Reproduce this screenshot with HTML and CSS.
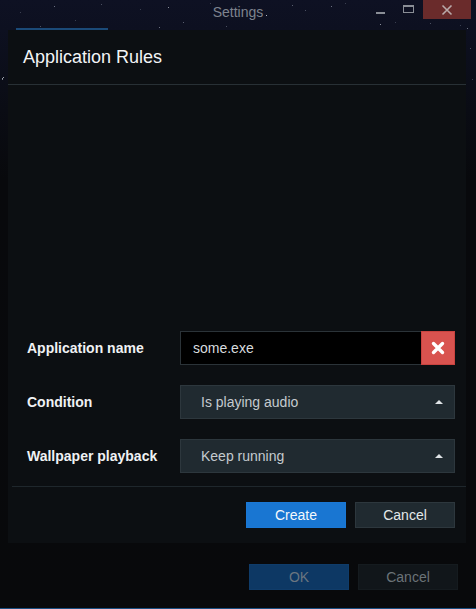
FILE: index.html
```html
<!DOCTYPE html>
<html>
<head>
<meta charset="utf-8">
<link rel="stylesheet" href="styles.css">
</head>
<body>
<div class="window">
  <div class="stars"></div>
  <div class="titlebar">
    <div class="title">Settings</div>
    <div class="controls">
      <span class="ctl min"><span class="min-bar"></span></span>
      <span class="ctl max"><span class="max-box"></span></span>
      <span class="ctl close">
        <svg width="12" height="12" viewBox="0 0 12 12"><path d="M1.5 1.5L10.5 10.5M10.5 1.5L1.5 10.5" stroke="#b9a9a9" stroke-width="1.6"/></svg>
      </span>
    </div>
  </div>
  <div class="tabline"></div>
  <div class="dialog">
    <div class="dlg-header">Application Rules</div>
    <div class="dlg-body">
      <div class="row">
        <div class="label">Application name</div>
        <div class="field">
          <div class="input">some.exe</div>
          <div class="clear">
            <svg width="14" height="14" viewBox="0 0 14 14"><path d="M2.5 2.5L11.5 11.5M11.5 2.5L2.5 11.5" stroke="#fff" stroke-width="3.4" stroke-linecap="round"/></svg>
          </div>
        </div>
      </div>
      <div class="row">
        <div class="label">Condition</div>
        <div class="field select">
          <span>Is playing audio</span>
          <span class="caret"></span>
        </div>
      </div>
      <div class="row">
        <div class="label">Wallpaper playback</div>
        <div class="field select">
          <span>Keep running</span>
          <span class="caret"></span>
        </div>
      </div>
    </div>
    <div class="dlg-footer">
      <button class="btn primary">Create</button>
      <button class="btn secondary">Cancel</button>
    </div>
  </div>
  <div class="win-footer">
    <button class="btn ok">OK</button>
    <button class="btn dim">Cancel</button>
  </div>
  <div class="bottomline"></div>
</div>
</body>
</html>
```
FILE: styles.css
```css
html, body {
  margin: 0;
  padding: 0;
  background: #08090b;
}
body {
  font-family: "Liberation Sans", Arial, sans-serif;
  width: 476px;
  height: 609px;
  overflow: hidden;
}
.window {
  position: relative;
  width: 476px;
  height: 609px;
  background: linear-gradient(to bottom, #0e1123 0px, #0d1020 30px, #0a0c14 110px, #08090c 180px, #08090b 100%);
  display: flex;
  flex-direction: column;
}
.stars {
  position: absolute;
  left: 0;
  top: 0;
  width: 1px;
  height: 1px;
  background: transparent;
  box-shadow:
    54px 6px #6a6f80, 101px 4px #4a4f60, 168px 7px #8a8f9a, 183px 22px #5a5f70,
    140px 9px #3a3f50, 20px 12px #3a3f50, 266px 15px #b0b4c0, 292px 5px #5a5f70,
    305px 10px #4a4f60, 331px 6px #6a6f80, 345px 3px #3a3f50, 380px 24px #8a8f9a,
    395px 22px #3a3f50, 430px 23px #4a4f60, 460px 25px #3a3f50, 470px 7px #5a5f70,
    40px 26px #4a4f60, 75px 20px #3a3f50, 159px 27px #6a6f80, 226px 26px #4a4f60,
    2px 78px #9a9faa, 3px 77px #9a9faa, 2px 79px #7a7f8a, 470px 48px #4a4f60,
    472px 79px #3a3f50, 467px 28px #6a6f80, 210px 3px #3a3f50, 250px 18px #4a4f60;
}
.titlebar {
  height: 28px;
  flex: none;
  display: flex;
  align-items: flex-start;
  position: relative;
}
.title {
  position: absolute;
  left: 0;
  right: 0;
  top: 4px;
  text-align: center;
  font-size: 14px;
  color: #7e838e;
}
.controls {
  margin-left: auto;
  display: flex;
  align-items: flex-start;
  margin-right: 5px;
}
.ctl {
  display: flex;
  align-items: center;
  justify-content: center;
  height: 19px;
}
.min { width: 28px; }
.min-bar {
  width: 9px;
  height: 2px;
  background: #8a8e96;
  margin-top: 7px;
}
.max { width: 29px; }
.max-box {
  width: 9px;
  height: 5px;
  border: 1px solid #8a8e96;
  border-top-width: 2px;
  margin-top: -1px;
}
.close {
  width: 48px;
  background: #6a2b2b;
}
.tabline {
  position: absolute;
  left: 16px;
  top: 28px;
  width: 92px;
  height: 2px;
  background: #1b4a78;
}
.dialog {
  margin-left: 8px;
  margin-top: 2px;
  width: 458px;
  height: 513px;
  background: #0c0f12;
  display: flex;
  flex-direction: column;
  position: relative;
}
.dlg-header {
  height: 55px;
  box-sizing: border-box;
  padding-left: 15px;
  padding-top: 17px;
  font-size: 18px;
  color: #f2f4f6;
  border-bottom: 1px solid #283035;
}
.dlg-body {
  flex: 1;
  display: flex;
  flex-direction: column;
  justify-content: flex-end;
  gap: 20px;
  padding: 0 11px 13px 19px;
}
.row {
  display: flex;
  align-items: center;
  height: 34px;
}
.label {
  width: 153px;
  font-size: 14px;
  font-weight: bold;
  color: #f0f2f4;
}
.field {
  flex: 1;
  height: 34px;
  box-sizing: border-box;
  display: flex;
}
.input {
  flex: 1;
  background: #000;
  border: 1px solid #2b3338;
  border-right: none;
  box-sizing: border-box;
  padding-left: 12px;
  font-size: 14px;
  line-height: 32px;
  color: #d8dcdf;
}
.clear {
  width: 34px;
  background: #d9534f;
  border: 1px solid #c9433f;
  box-sizing: border-box;
  display: flex;
  align-items: center;
  justify-content: center;
}
.select {
  background: #202a30;
  border: 1px solid #2d373d;
  align-items: center;
  padding-left: 20px;
  padding-right: 11px;
  font-size: 14px;
  color: #c5cbcf;
}
.select span:first-child { flex: 1; }
.caret {
  width: 0;
  height: 0;
  border-left: 4px solid transparent;
  border-right: 4px solid transparent;
  border-bottom: 4px solid #dfe3e6;
  margin-top: -1px;
}
.dlg-footer {
  margin-left: 4px;
  border-top: 1px solid #1f272c;
  height: 57px;
  box-sizing: border-box;
  display: flex;
  justify-content: flex-end;
  align-items: flex-start;
  gap: 9px;
  padding: 15px 11px 0 0;
}
.btn {
  width: 100px;
  height: 26px;
  box-sizing: border-box;
  font-family: "Liberation Sans", Arial, sans-serif;
  font-size: 14px;
  border: 1px solid transparent;
  padding: 0;
  margin: 0;
}
.primary {
  background: #1976d2;
  border-color: #1a78d6;
  color: #f4f8fc;
}
.secondary {
  background: #202a30;
  border-color: #2d373d;
  color: #e4e8ea;
}
.win-footer {
  display: flex;
  justify-content: flex-end;
  gap: 9px;
  padding: 21px 18px 0 0;
}
.ok {
  background: #0d3864;
  border-color: #0f3c6a;
  color: #6a7580;
}
.dim {
  background: #11161a;
  border-color: #151b1f;
  color: #6b7378;
}
.bottomline {
  position: absolute;
  left: 0;
  right: 0;
  bottom: 0;
  height: 1px;
  background: #1a4f82;
}
```
